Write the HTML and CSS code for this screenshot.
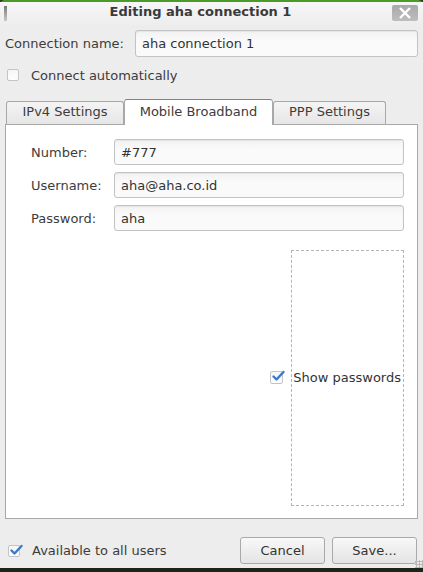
FILE: index.html
```html
<!DOCTYPE html>
<html>
<head>
<meta charset="utf-8">
<link rel="stylesheet" href="styles.css">
</head>
<body>
<div class="window">
  <div class="titlebar">
    <span class="grip-left"></span>
    <span class="title">Editing aha connection 1</span>
    <span class="close"><svg width="14" height="12" viewBox="0 0 14 12"><path d="M2 1 L12 11 M12 1 L2 11" stroke="#fff" stroke-width="2.4" fill="none"/></svg></span>
  </div>
  <div class="content">
    <div class="row name-row">
      <label class="lbl">Connection name:</label>
      <div class="entry grow">aha connection 1</div>
    </div>
    <div class="row check-row">
      <span class="check"></span>
      <span>Connect automatically</span>
    </div>
    <div class="tabs">
      <div class="tab">IPv4 Settings</div>
      <div class="tab active">Mobile Broadband</div>
      <div class="tab">PPP Settings</div>
    </div>
    <div class="panel">
      <div class="form">
        <div class="frow"><label>Number:</label><div class="entry grow">#777</div></div>
        <div class="frow"><label>Username:</label><div class="entry grow">aha@aha.co.id</div></div>
        <div class="frow"><label>Password:</label><div class="entry grow">aha</div></div>
      </div>
      <div class="lower">
        <div class="showpw">
          <span class="check checked"><svg width="16" height="14" viewBox="0 0 16 14"><path d="M3.5 7.5 L6.5 10.5 L13.5 3" stroke="#3b78c9" stroke-width="2.4" fill="none" stroke-linecap="round" stroke-linejoin="round"/></svg></span>
          <span class="sp-text">Show passwords</span>
        </div>
        <div class="dashed"></div>
      </div>
    </div>
    <div class="bottom">
      <div class="row avail">
        <span class="check checked"><svg width="16" height="14" viewBox="0 0 16 14"><path d="M3.5 7.5 L6.5 10.5 L13.5 3" stroke="#3b78c9" stroke-width="2.4" fill="none" stroke-linecap="round" stroke-linejoin="round"/></svg></span>
        <span>Available to all users</span>
      </div>
      <div class="buttons">
        <div class="btn">Cancel</div>
        <div class="btn">Save...</div>
      </div>
    </div>
  </div>
  <div class="resize-grip"></div>
</div>
<div class="desk"></div>
</body>
</html>
```
FILE: styles.css
```css
html, body {
  margin: 0;
  padding: 0;
  width: 423px;
  height: 572px;
  overflow: hidden;
  background: #2e3a26;
}
body {
  font-family: "DejaVu Sans", sans-serif;
  font-size: 13px;
  color: #3c3c3c;
  display: flex;
  flex-direction: column;
}
.window {
  position: relative;
  height: 568px;
  background: #ededed;
  border-top: 2px solid #4c9a2a;
  display: flex;
  flex-direction: column;
  border-radius: 5px 5px 0 0;
  box-sizing: border-box;
}
.desk {
  height: 4px;
  background: #1c2417;
}
.titlebar {
  height: 26px;
  display: flex;
  align-items: flex-start;
  justify-content: center;
  padding: 2px 22px 0 0;
  background: linear-gradient(#f7f7f7, #ececec);
  position: relative;
  box-sizing: border-box;
}
.title {
  font-weight: bold;
  color: #3a3a3a;
  font-size: 13px;
}
.grip-left {
  position: absolute;
  left: 4px;
  top: 4px;
  width: 3px;
  height: 15px;
  background: linear-gradient(#7a7a7a, #c8c8c8);
}
.close {
  position: absolute;
  right: 5px;
  top: 3px;
  width: 26px;
  height: 16px;
  border-radius: 2px;
  background: linear-gradient(#a9a9a9, #bdbdbd);
  display: flex;
  align-items: center;
  justify-content: center;
}
.content {
  flex: 1;
  display: flex;
  flex-direction: column;
  padding: 2px 5px 0 5px;
}
.row {
  display: flex;
  align-items: center;
}
.name-row {
  height: 27px;
  gap: 11px;
}
.grow { flex: 1; }
.entry {
  height: 27px;
  box-sizing: border-box;
  border: 1px solid #c3c3c3;
  border-radius: 3px;
  background: linear-gradient(#f2f2f2, #fafafa 40%);
  display: flex;
  align-items: center;
  padding-left: 6px;
  color: #333;
  box-shadow: inset 0 1px 1px rgba(0,0,0,0.06);
}
.check {
  width: 12px;
  height: 12px;
  box-sizing: border-box;
  border: 1px solid #c4c4c4;
  border-radius: 2px;
  background: linear-gradient(#f6f6f6, #fdfdfd);
  position: relative;
  flex: none;
}
.check svg {
  position: absolute;
  left: -1px;
  top: -3px;
}
.check-row {
  margin-top: 10px;
  height: 16px;
  gap: 12px;
  padding-left: 2px;
}
.tabs {
  margin-top: 13px;
  display: flex;
  align-items: flex-end;
  height: 28px;
  padding-left: 1px;
}
.tab {
  height: 23px;
  box-sizing: border-box;
  border: 1px solid #a8a8a8;
  border-bottom: none;
  border-radius: 3px 3px 0 0;
  background: linear-gradient(#f4f4f4, #e6e6e6);
  display: flex;
  align-items: center;
  justify-content: center;
  padding-bottom: 3px;
}
.tab:nth-child(1) { width: 118px; }
.tab:nth-child(3) { width: 113px; }
.tab.active {
  width: 149px;
  height: 26px;
  background: #fff;
  border-color: #a8a8a8;
  border-top: 1px solid #4a8fd6;
  position: relative;
  top: 1px;
  z-index: 1;
  padding-bottom: 3px;
}
.panel {
  height: 395px;
  box-sizing: border-box;
  background: #fff;
  border: 1px solid #a8a8a8;
  display: flex;
  flex-direction: column;
  padding: 14px 13px 12px 25px;
}
.form {
  display: flex;
  flex-direction: column;
  gap: 7px;
}
.frow {
  display: flex;
  align-items: center;
  height: 26px;
}
.frow label {
  width: 83px;
  flex: none;
}
.frow .entry {
  height: 26px;
}
.lower {
  flex: 1;
  display: flex;
  justify-content: flex-end;
  align-items: stretch;
  margin-top: 19px;
  position: relative;
}
.dashed {
  width: 113px;
  box-sizing: border-box;
  border: 1px dashed #b5b5b5;
}
.showpw {
  position: absolute;
  right: 3px;
  top: 50%;
  margin-top: -8px;
  display: flex;
  align-items: center;
  gap: 10px;
}
.showpw .check { width: 13px; height: 13px; }
.sp-text { color: #333; }
.bottom {
  flex: 1;
  display: flex;
  align-items: flex-start;
  justify-content: space-between;
  padding-top: 18px;
}
.avail {
  gap: 12px;
  padding-left: 3px;
  height: 27px;
}
.buttons {
  display: flex;
  gap: 7px;
  padding-right: 1px;
}
.btn {
  width: 85px;
  height: 27px;
  box-sizing: border-box;
  border: 1px solid #a9a9a9;
  border-radius: 3px;
  background: linear-gradient(#f8f8f8, #e4e4e4);
  display: flex;
  align-items: center;
  justify-content: center;
  color: #333;
}
.resize-grip {
  position: absolute;
  right: 0;
  bottom: 0;
  width: 8px;
  height: 8px;
  background-image: radial-gradient(circle, #b8b8b8 1px, transparent 1.2px);
  background-size: 3px 3px;
}
```
